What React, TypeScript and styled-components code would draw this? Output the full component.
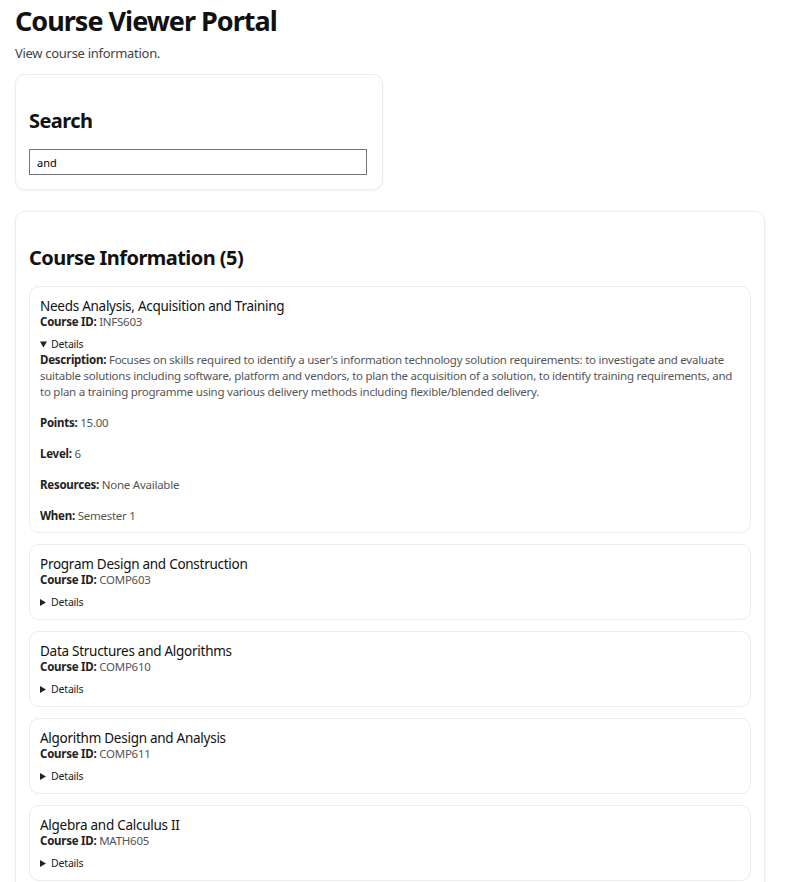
import React from "react";
import styled, { createGlobalStyle } from "styled-components";

const Global = createGlobalStyle`
  html, body { margin: 0; padding: 0; background: #fff; }
  body { font-family: "Noto Sans", "Open Sans", sans-serif; color: #111; }
  * { box-sizing: border-box; }
`;

const Page = styled.div`
  padding: 0 15px;
`;

const Title = styled.h1`
  font-size: 27px;
  line-height: 34px;
  font-weight: 700;
  margin: 4px 0 0 0;
  letter-spacing: -1px;
`;

const Subtitle = styled.p`
  font-size: 13px;
  line-height: 18px;
  color: #444;
  margin: 6px 0 0 0;
  letter-spacing: -0.3px;
`;

const Card = styled.section<{ $width: string; $top: number }>`
  width: ${(p) => p.$width};
  margin-top: ${(p) => p.$top}px;
  border: 1px solid #ececec;
  border-radius: 10px;
  box-shadow: 0 1px 3px rgba(0, 0, 0, 0.06);
  padding: 0 13px 14px 13px;
  background: #fff;
`;

const Heading = styled.h2`
  font-size: 20px;
  line-height: 24px;
  font-weight: 700;
  margin: 34px 0 16px 0;
  letter-spacing: -0.55px;
`;

const SearchInput = styled.input`
  display: block;
  width: 338px;
  height: 26px;
  border: 1px solid #767676;
  border-radius: 0;
  padding: 0 7px;
  font-family: "Noto Sans", sans-serif;
  font-size: 11px;
  color: #000;
  outline: none;
`;

const List = styled.div`
  display: flex;
  flex-direction: column;
  gap: 11px;
`;

const Item = styled.article<{ $open?: boolean }>`
  border: 1px solid #ececec;
  border-radius: 10px;
  padding: 11px 10px ${(p) => (p.$open ? 8 : 9)}px 10px;
`;

const ItemTitle = styled.div`
  font-size: 13.5px;
  line-height: 16px;
  color: #111;
  letter-spacing: -0.27px;
`;

const Line = styled.div<{ $gap?: number }>`
  font-size: 11.5px;
  line-height: 16px;
  color: #555;
  letter-spacing: -0.25px;
  margin-top: ${(p) => p.$gap ?? 0}px;
`;

const Label = styled.b`
  font-weight: 700;
  color: #222;
`;

const Details = styled.details`
  margin-top: 6px;
`;

const Summary = styled.summary`
  font-size: 10.5px;
  line-height: 16px;
  color: #222;
  cursor: pointer;
  letter-spacing: -0.2px;
`;

type Course = {
  title: string;
  id: string;
  open?: boolean;
  description?: string;
  points?: string;
  level?: string;
  resources?: string;
  when?: string;
};

const courses: Course[] = [
  {
    title: "Needs Analysis, Acquisition and Training",
    id: "INFS603",
    open: true,
    description:
      "Focuses on skills required to identify a user's information technology solution requirements: to investigate and evaluate suitable solutions including software, platform and vendors, to plan the acquisition of a solution, to identify training requirements, and to plan a training programme using various delivery methods including flexible/blended delivery.",
    points: "15.00",
    level: "6",
    resources: "None Available",
    when: "Semester 1",
  },
  { title: "Program Design and Construction", id: "COMP603" },
  { title: "Data Structures and Algorithms", id: "COMP610" },
  { title: "Algorithm Design and Analysis", id: "COMP611" },
  { title: "Algebra and Calculus II", id: "MATH605" },
];

export default function App() {
  return (
    <>
      <Global />
      <Page>
        <Title>Course Viewer Portal</Title>
        <Subtitle>View course information.</Subtitle>
        <Card $width="368px" $top={12}>
          <Heading>Search</Heading>
          <SearchInput defaultValue="and" />
        </Card>
        <Card $width="750px" $top={21}>
          <Heading>Course Information (5)</Heading>
          <List>
            {courses.map((c) => (
              <Item key={c.id} $open={c.open}>
                <ItemTitle>{c.title}</ItemTitle>
                <Line>
                  <Label>Course ID:</Label> {c.id}
                </Line>
                <Details open={c.open}>
                  <Summary>Details</Summary>
                  {c.description && (
                    <>
                      <Line>
                        <Label>Description:</Label> {c.description}
                      </Line>
                      <Line $gap={15}>
                        <Label>Points:</Label> {c.points}
                      </Line>
                      <Line $gap={15}>
                        <Label>Level:</Label> {c.level}
                      </Line>
                      <Line $gap={15}>
                        <Label>Resources:</Label> {c.resources}
                      </Line>
                      <Line $gap={15}>
                        <Label>When:</Label> {c.when}
                      </Line>
                    </>
                  )}
                </Details>
              </Item>
            ))}
          </List>
        </Card>
      </Page>
    </>
  );
}
